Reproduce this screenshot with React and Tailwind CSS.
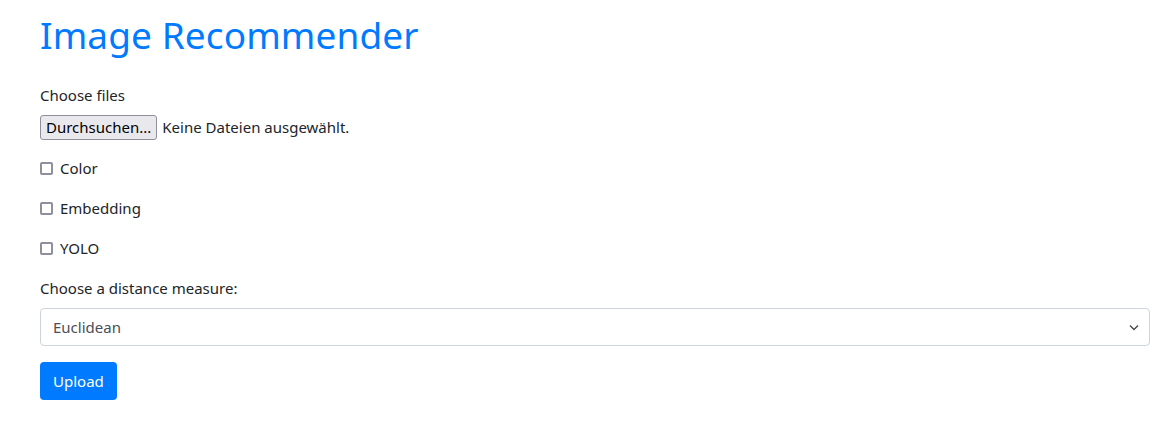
export default function App() {
  const font = { fontFamily: '"Noto Sans", "Open Sans", sans-serif' };
  return (
    <div className="bg-white w-[1176px] h-[440px] text-[#212529]" style={font}>
      <div className="ml-[40px] w-[1110px] pt-[11px]">
        <h1 className="text-[37px] leading-[48px] text-[#007bff] font-normal mb-[24px] tracking-[0.1px]">Image Recommender</h1>
        <div className="text-[15px] leading-[24px] mb-[8px]">Choose files</div>
        <div className="flex items-center h-[25px] mb-[16px]">
          <div className="h-[25px] px-[5px] flex items-center bg-[#e9e9ed] border border-[#8f8f9d] rounded-[3px] text-[15px] text-black">Durchsuchen...</div>
          <span className="ml-[5px] text-[15px]">Keine Dateien ausgewählt.</span>
        </div>
        <div className="flex flex-col gap-[16px] mb-[16px]">
          {["Color", "Embedding", "YOLO"].map((l) => (
            <label key={l} className="flex items-center h-[24px] text-[15px]">
              <span className="w-[13px] h-[13px] border-2 border-[#8f8f9d] rounded-[2px] mr-[7px]"></span>
              {l}
            </label>
          ))}
        </div>
        <div className="text-[15px] leading-[24px] mb-[8px]">Choose a distance measure:</div>
        <div className="relative h-[38px] border border-[#ced4da] rounded-[4px] flex items-center px-[12px] text-[15px] text-[#495057] mb-[16px]">
          Euclidean
          <svg className="absolute right-[10px] top-[15px]" width="10" height="7" viewBox="0 0 10 7">
            <path d="M1 1.5 L5 5.5 L9 1.5" fill="none" stroke="#4a4a4a" strokeWidth="1.4" />
          </svg>
        </div>
        <button className="h-[38px] px-[13px] bg-[#007bff] text-white rounded-[4px] text-[15px]">Upload</button>
      </div>
    </div>
  );
}
